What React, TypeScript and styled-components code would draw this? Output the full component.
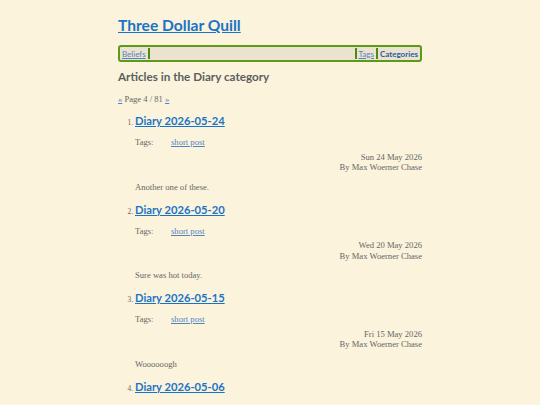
import { createGlobalStyle } from "styled-components";
import styled from "styled-components";

const GlobalStyle = createGlobalStyle`
  html, body {
    margin: 0;
    padding: 0;
    background: #fbf3dc;
  }
  body {
    font-family: "Liberation Serif", serif;
    color: #555;
  }
`;

const posts = [
  { n: 1, title: "Diary 2026-05-24", date: "Sun 24 May 2026", summary: "Another one of these." },
  { n: 2, title: "Diary 2026-05-20", date: "Wed 20 May 2026", summary: "Sure was hot today." },
  { n: 3, title: "Diary 2026-05-15", date: "Fri 15 May 2026", summary: "Woooooogh" },
  { n: 4, title: "Diary 2026-05-06", date: "Wed 06 May 2026", summary: "More of these." },
];

export default function App() {
  return (
    <>
      <GlobalStyle />
      <Page>
        <SiteTitle href="#">Three Dollar Quill</SiteTitle>
        <Nav>
          <NavLink href="#">Beliefs</NavLink>
          <Sep />
          <Spacer />
          <Sep />
          <NavLink href="#">Tags</NavLink>
          <Sep />
          <NavLink href="#" $current>
            Categories
          </NavLink>
        </Nav>
        <Heading>Articles in the Diary category</Heading>
        <Pager>
          <PagerLink href="#">«</PagerLink> Page 4 / 81 <PagerLink href="#">»</PagerLink>
        </Pager>
        <List>
          {posts.map((p) => (
            <Item key={p.n}>
              <ItemTitle href="#">{p.title}</ItemTitle>
              <TagsRow>
                <TagsLabel>Tags:</TagsLabel>
                <TagLink href="#">short post</TagLink>
              </TagsRow>
              <Meta>
                <div>{p.date}</div>
                <div>By Max Woerner Chase</div>
              </Meta>
              <Summary>{p.summary}</Summary>
            </Item>
          ))}
        </List>
      </Page>
    </>
  );
}

const Page = styled.main`
  width: 304px;
  margin: 0 auto;
  padding-top: 15px;
  display: flex;
  flex-direction: column;
`;

const SiteTitle = styled.a`
  font-family: Lato, sans-serif;
  font-weight: 700;
  font-size: 15.6px;
  line-height: 21px;
  color: #1a74c6;
  text-decoration: underline;
  align-self: flex-start;
`;

const Nav = styled.nav`
  margin-top: 9px;
  height: 11px;
  display: flex;
  align-items: center;
  gap: 2px;
  padding: 1px 2px;
  border: 2px solid #5d9a1c;
  border-radius: 3px;
  background: #ebe3cf;
  font-family: Lato, sans-serif;
  font-size: 8px;
`;

const NavLink = styled.a<{ $current?: boolean }>`
  color: ${(p) => (p.$current ? "#1f5d9e" : "#4f86c0")};
  font-weight: ${(p) => (p.$current ? 700 : 400)};
  text-decoration: ${(p) => (p.$current ? "none" : "underline")};
`;

const Sep = styled.span`
  width: 2px;
  height: 11px;
  background: #4f8a14;
`;

const Spacer = styled.span`
  flex: 1;
`;

const Heading = styled.h2`
  margin: 6px 0 0;
  font-family: Lato, sans-serif;
  font-weight: 700;
  font-size: 11.7px;
  line-height: 16px;
  color: #5a5f5f;
`;

const Pager = styled.p`
  margin: 10px 0 0;
  font-size: 8.6px;
  color: #666;
`;

const PagerLink = styled.a`
  color: #4f86c0;
`;

const List = styled.ol`
  margin: 9px 0 0;
  padding-left: 17px;
  font-size: 7.5px;
  color: #666;
`;

const Item = styled.li`
  margin-bottom: 9px;
`;

const ItemTitle = styled.a`
  font-family: Lato, sans-serif;
  font-weight: 700;
  font-size: 11.2px;
  line-height: 16px;
  color: #1a74c6;
  text-decoration: underline;
`;

const TagsRow = styled.div`
  margin-top: 8px;
  display: flex;
  font-size: 8.6px;
  line-height: 11px;
`;

const TagsLabel = styled.span`
  width: 36px;
  color: #666;
`;

const TagLink = styled.a`
  color: #4f86c0;
`;

const Meta = styled.div`
  margin-top: 3.5px;
  text-align: right;
  font-size: 8.6px;
  line-height: 10.5px;
  color: #666;
`;

const Summary = styled.p`
  margin: 9px 0 0;
  font-size: 8.6px;
  line-height: 11px;
  color: #666;
`;
